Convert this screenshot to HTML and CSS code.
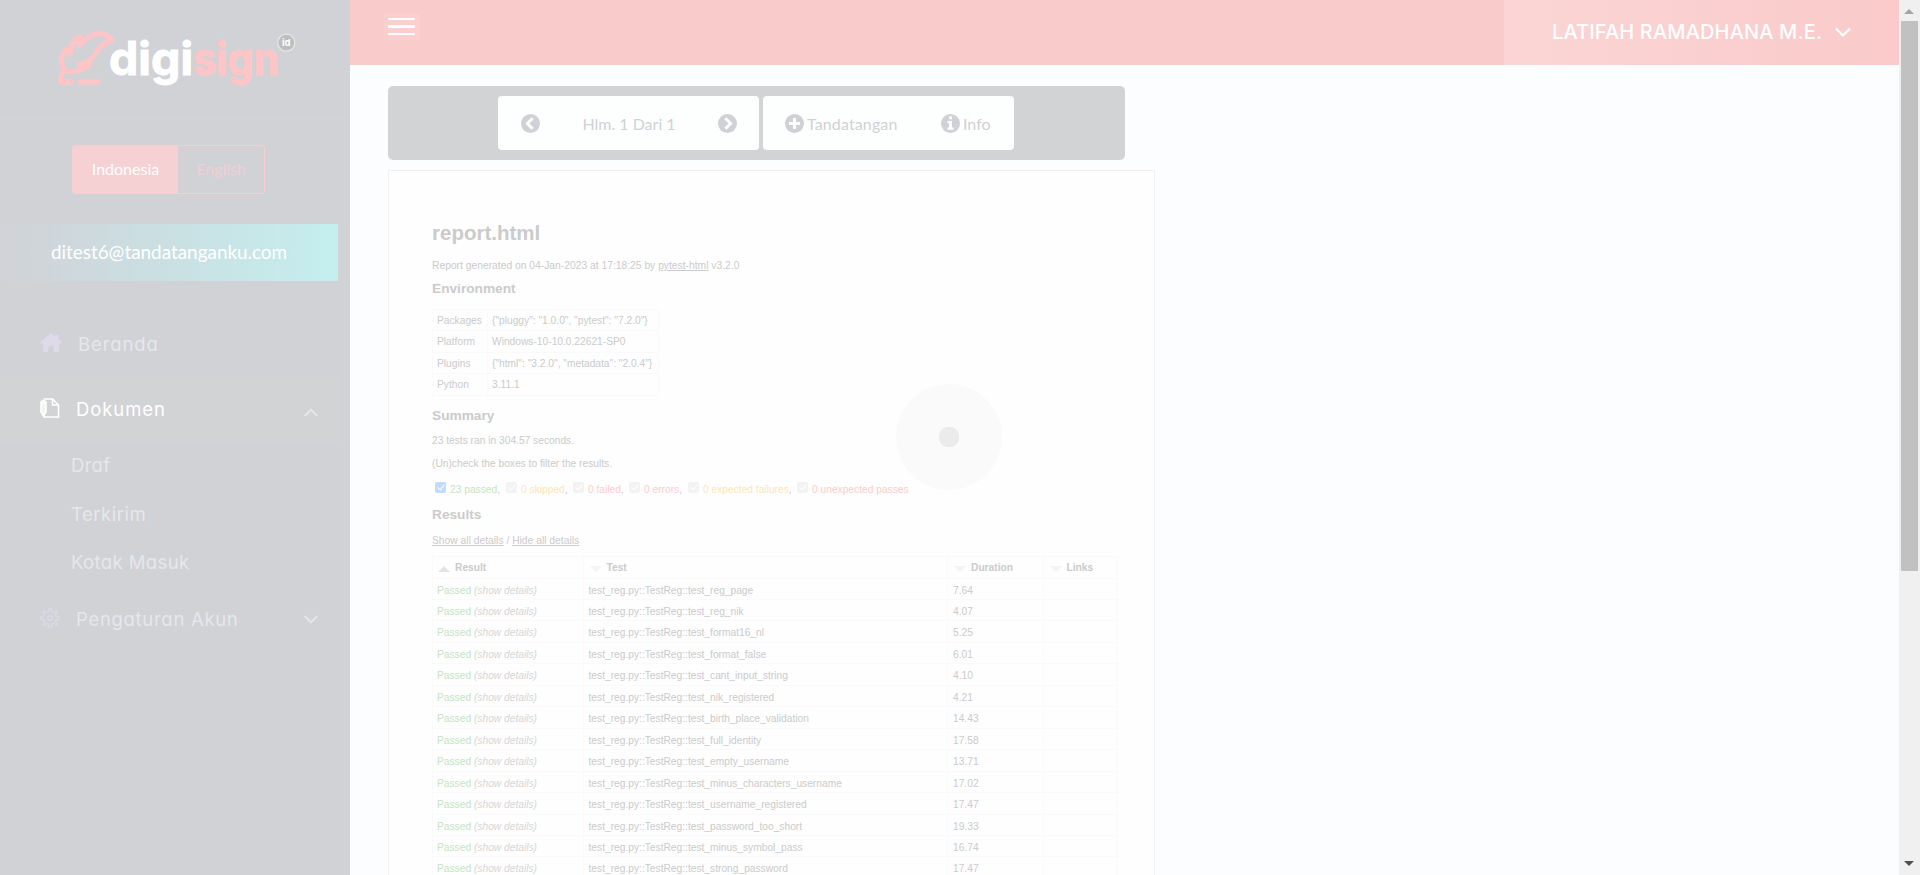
FILE: index.html
```html
<!DOCTYPE html>
<html lang="id">
<head>
<meta charset="utf-8">
<title>Digisign</title>
<link rel="stylesheet" href="styles.css">
</head>
<body>
<div class="app">
  <aside class="sidebar">
    <div class="brand">
      <svg width="240" height="60" viewBox="57 28 240 60" role="img" aria-label="digisign id">
        <g fill="none" stroke="#ffc5c6" stroke-width="5" stroke-linejoin="round" stroke-linecap="round">
          <path d="M112 40C107 34 99 32 93 35C87 37 83 41 79 46L81 37C74 39 71 43 70 54L67 49C61 54 60 61 64 70C73 73 83 71 89 65L79 65C89 62 92 60 95 54C99 47 105 42 112 40Z"/>
          <path d="M64 71C61 75 60 79 61 82H71M80 82H98"/>
        </g>
        <g class="logo-text">
          <text x="109" y="74.500" textLength="84" lengthAdjust="spacingAndGlyphs" fill="#fff" stroke="#fff">digi</text>
          <text x="193" y="74.500" textLength="86" lengthAdjust="spacingAndGlyphs" fill="#ffc5c6" stroke="#ffc5c6">sign</text>
        </g>
        <circle cx="286.300" cy="42.700" r="8.500" fill="#bebebe" stroke="#e6e6e6" stroke-width="1.300"/>
        <text class="logo-id" x="286.300" y="46.300" text-anchor="middle">id</text>
      </svg>
    </div>
    <div class="lang"><span class="lang-on">Indonesia</span><span class="lang-off">English</span></div>
    <div class="account">ditest6@tandatanganku.com</div>
    <nav class="nav">
      <a class="item home">
        <svg width="22" height="20" viewBox="0 0 22 20"><path fill="#dedaea" d="M11 0L0 9.500L1.500 11L3 10V17.500Q3 19 4.500 19H8.500V13H13.500V19H17.500Q19 19 19 17.500V10L20.500 11L22 9.500L18.500 6.500V2H15.500V4Z"/></svg>
        <span class="t-beranda">Beranda</span></a>
      <a class="item active">
        <svg class="doc" width="20" height="20" viewBox="0 0 20 20" fill="none" stroke="#fff" stroke-width="1.600"><path d="M3.500 1H12.500L18.500 7V19H4V17M12.500 1V7H18.500"/><path fill="#f4f5ec" d="M1 4Q3.500 1 6 4V14L3.500 18L1 14ZM1 5.500H6"/></svg>
        <span class="t-dokumen">Dokumen</span>
        <svg class="chev" width="14" height="9" viewBox="0 0 14 9" fill="none" stroke="#e7e8ea" stroke-width="1.800"><path d="M.7 8L7 1.700L13.300 8"/></svg></a>
      <a class="sub t-draf">Draf</a>
      <a class="sub t-terkirim">Terkirim</a>
      <a class="sub t-kotak">Kotak Masuk</a>
      <a class="item settings">
        <svg class="gear" width="20" height="20" viewBox="0 0 20 20" fill="none" stroke="#dcdae6" stroke-width="1.300" stroke-linejoin="round"><path d="M8.800 1H11.200L12 4L13.500 4.600L16 3L17.200 4.200L15.500 6.700L16 8.200L19 8.800V11.200L16 12L15.500 13.500L17.200 16L16 17.200L13.500 15.500L12 16L11.200 19H8.800L8 16L6.500 15.500L4 17.200L2.800 16L4.500 13.500L4 12L1 11.200V8.800L4 8.200L4.500 6.700L2.800 4.200L4 3L6.500 4.600L8 4Z"/><circle cx="10" cy="10" r="2.300"/></svg>
        <span class="t-akun">Pengaturan Akun</span>
        <svg class="chev" width="14" height="9" viewBox="0 0 14 9" fill="none" stroke="#e7e8ea" stroke-width="1.800"><path d="M.7 1L7 7.300L13.300 1"/></svg></a>
    </nav>
  </aside>
  <div class="content">
    <header class="topbar">
      <div class="burger"><i></i><i></i><i></i></div>
      <div class="user"><span>LATIFAH RAMADHANA M.E.</span>
        <svg width="16" height="11" viewBox="0 0 16 11" fill="none" stroke="#fff" stroke-width="2.200"><path d="M1 1.500L8 8.500L15 1.500"/></svg></div>
    </header>
    <main class="main">
      <div class="toolbar">
        <div class="group pager">
          <svg width="19" height="19" viewBox="0 0 19 19"><circle cx="9.500" cy="9.500" r="9.500" fill="#d0d1d4"/><path d="M11.600 4.300L6.400 9.500L11.600 14.700" fill="none" stroke="#fdffff" stroke-width="3"/></svg>
          <span>Hlm. 1 Dari 1</span>
          <svg width="19" height="19" viewBox="0 0 19 19"><circle cx="9.500" cy="9.500" r="9.500" fill="#d0d1d4"/><path d="M7.400 4.300L12.600 9.500L7.400 14.700" fill="none" stroke="#fdffff" stroke-width="3"/></svg>
        </div>
        <div class="group actions">
          <svg width="19" height="19" viewBox="0 0 19 19"><circle cx="9.500" cy="9.500" r="9.500" fill="#d0d1d4"/><path d="M9.500 4V15M4 9.500H15" fill="none" stroke="#fdffff" stroke-width="3"/></svg>
          <span class="sign">Tandatangan</span>
          <svg width="19" height="19" viewBox="0 0 19 19"><circle cx="9.500" cy="9.500" r="9.500" fill="#d0d1d4"/><path d="M8 2.500H11V5.200H8ZM6.500 7H11V13.500H12.500V15.800H6.500V13.500H8V9.200H6.500Z" fill="#fdffff"/></svg>
          <span class="info">Info</span>
        </div>
      </div>
      <article class="page">
        <h1>report.html</h1>
        <p class="generated">Report generated on 04-Jan-2023 at 17:18:25 by <u>pytest-html</u> v3.2.0</p>
        <h2 class="h-env">Environment</h2>
        <div class="env">
          <div>Packages</div><div>{"pluggy": "1.0.0", "pytest": "7.2.0"}</div>
          <div>Platform</div><div>Windows-10-10.0.22621-SP0</div>
          <div>Plugins</div><div>{"html": "3.2.0", "metadata": "2.0.4"}</div>
          <div>Python</div><div>3.11.1</div>
        </div>
        <h2 class="h-sum">Summary</h2>
        <p class="ran">23 tests ran in 304.57 seconds.</p>
        <p class="hint">(Un)check the boxes to filter the results.</p>
        <div class="filters">
          <span class="f f1"><i class="box on"></i><b class="green">23 passed</b>,</span>
          <span class="f f2"><i class="box"></i><b class="orange">0 skipped</b>,</span>
          <span class="f f3"><i class="box"></i><b class="red">0 failed</b>,</span>
          <span class="f f4"><i class="box"></i><b class="red">0 errors</b>,</span>
          <span class="f f5"><i class="box"></i><b class="orange">0 expected failures</b>,</span>
          <span class="f"><i class="box"></i><b class="red">0 unexpected passes</b></span>
        </div>
        <h2 class="h-res">Results</h2>
        <p class="links"><u>Show all details</u> / <u>Hide all details</u></p>
        <div class="results" id="results">
          <div class="th"><i class="up"></i>Result</div><div class="th"><i class="down"></i>Test</div><div class="th"><i class="down"></i>Duration</div><div class="th"><i class="down"></i>Links</div>
        </div>
      </article>
    </main>
  </div>
  <div class="scrollbar"><i class="s-up"></i><i class="thumb"></i><i class="s-down"></i></div>
</div>
<div class="loader"></div>
<script src="rows.js"></script>
</body>
</html>
```
FILE: rows.js
```js
const rows = [
  ['reg_page', '7.64'],
  ['reg_nik', '4.07'],
  ['format16_nl', '5.25'],
  ['format_false', '6.01'],
  ['cant_input_string', '4.10'],
  ['nik_registered', '4.21'],
  ['birth_place_validation', '14.43'],
  ['full_identity', '17.58'],
  ['empty_username', '13.71'],
  ['minus_characters_username', '17.02'],
  ['username_registered', '17.47'],
  ['password_too_short', '19.33'],
  ['minus_symbol_pass', '16.74'],
  ['strong_password', '17.47']
];
document.getElementById('results').insertAdjacentHTML('beforeend', rows.map(([name, time]) =>
  `<div><span class="green">Passed</span> <em>(show details)</em></div><div>test_reg.py::TestReg::test_${name}</div><div>${time}</div><div></div>`
).join(''));
```
FILE: styles.css
```css
* { box-sizing: border-box; }
html, body { margin: 0; height: 875px; overflow: hidden; }
body { font-family: Lato, sans-serif; background: #fcfdff; }
svg { display: block; flex: none; }
.app { display: flex; height: 875px; }

.sidebar { width: 350px; flex: none; background: #d1d2d6; }
.brand { height: 120px; padding: 28px 0 0 57px; border-bottom: 1px solid #d4d4d7; }
.logo-text { font: 700 46px Inter, sans-serif; stroke-width: 1; }
.logo-id { font: 700 9.500px Inter, sans-serif; fill: #fff; }
.lang { display: flex; width: 193px; height: 49px; margin: 25px 0 0 72px; border: 1px solid #f5cfd2; border-radius: 3px; font-size: 16px; line-height: 46px; text-align: center; }
.lang-on { width: 105px; background: #f5d1d4; color: #fff; }
.lang-off { flex: 1; color: #f0cfd3; }
.account { width: 338px; height: 57px; margin-top: 30px; line-height: 56px; text-align: center; font-size: 18.900px; color: #fff; background: linear-gradient(90deg, #d1d2d6, #cbdde1 40%, #c8e5e7 70%, #c4efef); }

.nav { font: 18.500px Inter, sans-serif; font-feature-settings: "cv11"; color: #e6e7ea; }
.item { display: flex; align-items: center; width: 338px; height: 66px; padding: 0 20px 0 40px; }
.item span { margin: -2px 0 0 16px; }
.chev { margin-left: auto; }
.home { margin-top: 30px; height: 66px; }
.home svg { margin-top: -2px; }
.item .t-beranda { margin-top: 0; letter-spacing: .9px; }
.active { background: #d2d3d4; color: #fff; }
.active .chev { transform: translateY(2px); }
.doc { margin-top: -5px; }
.gear { margin-top: -3px; }
.sub { display: block; height: 48.500px; line-height: 47px; padding-left: 71px; }
.t-draf { margin-top: -1px; letter-spacing: .3px; }
.t-terkirim { letter-spacing: .5px; }
.t-dokumen { letter-spacing: .9px; }
.t-kotak { letter-spacing: .4px; }
.t-akun { letter-spacing: .7px; }
.settings { height: 64px; }

.content { width: 1549px; flex: none; }
.topbar { height: 65px; background: #facbcb; display: flex; justify-content: space-between; }
.burger { display: flex; flex-direction: column; gap: 5px; margin: 14px 0 0 34px; width: 36px; height: 26px; padding: 4px; background: #fbcfcf; }
.burger i { height: 2px; background: #fff; border-radius: 1px; width: 27px; }
.burger i:nth-child(2) { height: 3px; }
.user { width: 395px; display: flex; align-items: center; padding: 0 48px; justify-content: space-between; background: linear-gradient(90deg, #fbd5d5, #facaca); color: #fff; font: 500 20px Inter, sans-serif; }
.user span { letter-spacing: .15px; white-space: nowrap; margin-top: -2px; }
.main { padding: 21px 0 0 38px; height: 810px; overflow: hidden; }
.toolbar { width: 737px; height: 74px; padding: 10px 0 10px 110px; display: flex; gap: 4px; background: #d2d3d5; border-radius: 5px; }
.group { height: 54px; display: flex; align-items: center; background: #fdffff; border-radius: 4px; color: #d0d1d5; font-size: 16px; }
.pager { width: 261px; justify-content: space-between; padding: 0 22px 0 23px; }
.actions { width: 251px; padding-left: 22px; }
.sign { width: 137px; padding-left: 3px; letter-spacing: .12px; }
.info { padding-left: 3px; }

.page { width: 767px; height: 720px; margin-top: 10px; padding: 49px 0 0 43px; border: 1px solid #f0f1f3; background: #fefefe; font: 10.220px/20px "Liberation Sans", Arial, sans-serif; color: #cbcbcb; white-space: nowrap; overflow: hidden; }
.page p, .page h1, .page h2 { margin: 0; height: 20px; }
.page h1 { height: 26px; font-size: 20.500px; line-height: 26px; }
.page h2 { font-size: 13.700px; }
.page .generated { margin-top: 10px; font-size: 10.300px; }
.page .h-env { margin-top: 3px; }
.env { width: 227px; margin-top: 10px; display: grid; grid-template-columns: 55px 171px; grid-auto-rows: 21.400px; border: solid #fafafa; border-width: 1px 0 0 1px; }
.env div, .results div { border: solid #fafafa; border-width: 0 1px 1px 0; padding-left: 4px; line-height: 21px; }
.page .h-sum { margin-top: 10.500px; }
.page .ran { margin-top: 5px; }
.page .hint { margin-top: 2.500px; }
.filters { display: flex; margin-top: 6px; padding-left: 3px; height: 20px; }
.f { display: flex; }
.f b { font-weight: 400; }
.box { width: 11px; height: 11px; border-radius: 2px; background: #f3f3f3; margin: 2px 4px 0 0; }
.box::after { content: ""; display: block; width: 3px; height: 6px; margin: 1px 0 0 4px; border: solid #fff; border-width: 0 1.500px 1.500px 0; transform: rotate(40deg); }
.box.on { background: #bfdcff; }
.f1 { width: 71px; } .f2 { width: 67px; } .f3 { width: 56px; } .f4 { width: 59px; } .f5 { width: 109px; }
.green { color: #c5e4c5; } .orange { color: #ffe5b8; } .red { color: #ffcccc; }
.page .h-res { margin-top: 5px; }
.page .links { margin-top: 6px; font-size: 10.300px; }
.results { width: 687px; margin-top: 5.500px; display: grid; grid-template-columns: 150.500px 364.500px 95.500px 74px; grid-auto-rows: 21.460px; border: solid #fafafa; border-width: 1px 0 0 1px; }
.results div { padding-left: 5px; line-height: 23px; }
.results div:nth-child(4n + 1) { padding-left: 4px; }
.results .th { font-weight: 700; display: flex; align-items: center; }
.th i { border: solid transparent; border-width: 0 6px; margin: 3px 5px 0 1px; }
.th .up { border-bottom: 6px solid #e4e4e4; }
.th .down { border-top: 6px solid #f4f4f4; }
em { color: #d6d6d6; }

.scrollbar { width: 21px; flex: none; background: #f0f0f0; display: flex; flex-direction: column; align-items: center; padding: 9px 1px 9px 0; }
.s-up { border: solid transparent; border-width: 0 5px 5px; border-bottom-color: #a3a3a3; }
.thumb { width: 17px; height: 550px; margin-top: 7px; background: #c1c1c1; }
.s-down { border: solid transparent; border-width: 5px 5px 0; border-top-color: #505050; margin-top: auto; }
.loader { position: absolute; left: 896px; top: 384px; width: 106px; height: 106px; border-radius: 50%; background: radial-gradient(circle, #ebebeb 10px, #fafafa 10.500px); }
```
